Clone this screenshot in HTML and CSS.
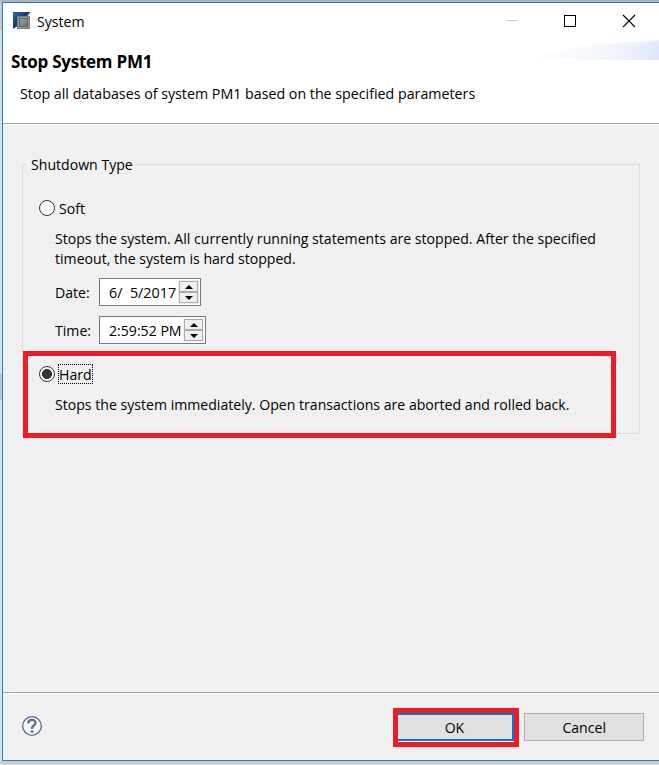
FILE: index.html
```html
<!DOCTYPE html>
<html lang="en">
<head>
<meta charset="utf-8">
<title>System</title>
<link rel="stylesheet" href="styles.css">
</head>
<body>
<main class="window">
  <header class="banner">
    <svg class="swoosh" width="137" height="20" viewBox="0 0 137 20">
      <defs>
        <linearGradient id="s1"><stop offset="0" stop-color="#fff"/><stop offset="1" stop-color="#edf2fc"/></linearGradient>
        <linearGradient id="s2"><stop offset="0" stop-color="#fff" stop-opacity="0"/><stop offset="1" stop-color="#dce4f8"/></linearGradient>
      </defs>
      <path d="M0 20C34 9 80 2 137 0v20z" fill="url(#s1)"/>
      <path d="M40 20C66 8 100 3 137 1v19z" fill="url(#s2)" opacity=".55"/>
      <path d="M48 20C72 9 110 6 137 6v14z" fill="url(#s2)" opacity=".8"/>
    </svg>
    <div class="titlebar">
      <svg class="app-icon" width="18" height="18" viewBox="0 0 18 18">
        <defs>
          <linearGradient id="blue" x1="0" y1="0" x2="1" y2="1"><stop offset="0" stop-color="#356b9f"/><stop offset=".45" stop-color="#123e70"/><stop offset="1" stop-color="#b8cbdc"/></linearGradient>
          <linearGradient id="grey" x1="0" y1="0" x2="1" y2="1"><stop offset="0" stop-color="#a5a5a5"/><stop offset="1" stop-color="#6e6e6e"/></linearGradient>
        </defs>
        <path d="M0 0h17.500L14 5H5v9l-5 3z" fill="url(#blue)"/>
        <rect x="4.500" y="4.500" width="12" height="12" fill="#999" stroke="#777"/>
        <rect x="6.500" y="6.500" width="8" height="8" fill="url(#grey)" stroke="#606060"/>
      </svg>
      <span class="title narrow">System</span>
      <svg class="controls" width="132" height="16" viewBox="0 0 132 16" fill="none" shape-rendering="crispEdges">
        <path d="M0 6.500h12" stroke="#ccc"/>
        <rect x="58.500" y="1.500" width="11" height="11" stroke="#000"/>
        <path d="M117 1l12 12M129 1l-12 12" stroke="#000" stroke-width="1.100" shape-rendering="auto"/>
      </svg>
    </div>
    <h1>Stop System PM1</h1>
    <p class="subtitle"><span class="narrow subtitle-text">Stop all databases of system PM1 based on the specified parameters</span></p>
  </header>
  <section class="content">
    <fieldset class="group">
      <legend><span class="narrow">Shutdown Type</span></legend>
      <label class="option"><span class="radio"></span><span class="option-name narrow">Soft</span></label>
      <p class="description"><span class="narrow">Stops the system. All currently running statements are stopped. After the specified<br>timeout, the system is hard stopped.</span></p>
      <div class="row">
        <span class="row-label"><span class="narrow">Date:</span></span>
        <div class="spinner date"><span class="value narrow">6/&nbsp; 5/2017</span>
          <span class="steps"><i class="step up"></i><i class="step down"></i></span></div>
      </div>
      <div class="row">
        <span class="row-label"><span class="narrow">Time:</span></span>
        <div class="spinner time"><span class="value narrow">2:59:52 PM</span>
          <span class="steps"><i class="step up"></i><i class="step down"></i></span></div>
      </div>
      <label class="option hard"><span class="radio checked"></span><span class="option-name focused"><span class="narrow">Hard</span></span></label>
      <p class="description"><span class="narrow">Stops the system immediately. Open transactions are aborted and rolled back.</span></p>
      <div class="highlight"></div>
    </fieldset>
  </section>
  <footer class="footer">
    <svg class="help" width="20" height="20" viewBox="0 0 20 20" fill="none">
      <circle cx="10" cy="10" r="9.300" fill="#f7f7f7" stroke="#596c91" stroke-width="1.300"/>
      <path d="M6.300 7.300C6.300 2.800 13.700 2.800 13.500 7c-.1 2.300-3.500 2.500-3.500 5.700" stroke="#596c91" stroke-width="2.300"/>
      <rect x="8.700" y="14.300" width="2.600" height="2.400" rx=".7" fill="#596c91"/>
    </svg>
    <div class="ok-highlight"><button class="button ok"><span class="narrow centered">OK</span></button></div>
    <button class="button cancel"><span class="narrow centered">Cancel</span></button>
  </footer>
</main>
</body>
</html>
```
FILE: styles.css
```css
* { box-sizing: border-box; }
body {
  margin: 0;
  height: 765px;
  padding: 2px 0 0 2px;
  overflow: hidden;
  background: linear-gradient(#b4b4b4 0 2px, #c4c8cd 2px 30px, #dedede 30px 374px, #c3c3c3 374px 400px, #dedede 400px 761px, #c8c5c5 761px, #d8d5d5 765px);
  font: 15px/20px "Open Sans", "Noto Sans", sans-serif;
  color: #000;
}
h1, p, fieldset, legend { margin: 0; padding: 0; }
.narrow { display: inline-block; transform: scaleX(.94); transform-origin: 0 50%; white-space: nowrap; }
.subtitle-text { transform: scaleX(.949); }
.centered { transform-origin: 50% 50%; }
.window {
  display: flex;
  flex-direction: column;
  height: 759px;
  background: #f0f0f0;
  border: 1px solid #1883d7;
  border-right: 0;
}
.banner {
  position: relative;
  height: 123px;
  background: #fff;
  border-bottom: 2px solid #fff;
  box-shadow: inset 0 -1px #a0a0a0;
}
.banner { height: 122px; border-bottom: 1px solid #fff; box-shadow: inset 0 -1px #a0a0a0; }
.swoosh { position: absolute; right: 0; top: 37px; }
.titlebar { display: flex; align-items: center; height: 37px; padding-left: 10px; }
.app-icon { margin-top: -2px; }
.title { margin: -2px 0 0 6px; }
.controls { margin-left: auto; margin-right: 21px; }
h1 { padding: 12px 0 0 8px; font-size: 17px; line-height: 20px; letter-spacing: -.25px; }
.subtitle { padding: 11px 0 0 17px; line-height: 20px; white-space: nowrap; }
.content { flex: 1; padding: 29px 19px 0 19px; }
.group {
  position: relative;
  min-width: 0;
  height: 280px;
  padding: 0 0 0 14px;
  border: 1px solid #dcdcdc;
}
legend { width: 107px; height: 20px; margin-left: -10px; padding: 0 0 0 4px; }
.option { display: flex; align-items: center; height: 22px; margin: 23px 0 0 2px; }
.radio {
  width: 16px;
  height: 16px;
  border: 1px solid #333;
  border-radius: 50%;
  background: #fff;
}
.checked { background: radial-gradient(circle, #333 0 4.700px, #fff 5.300px); }
.option-name { margin-left: 4px; }
.focused { width: 35px; height: 20px; margin-left: 3px; padding-left: 1px; line-height: 20px; outline: 1px dotted #000; outline-offset: -1px; }
.description { padding: 9px 0 0 18px; line-height: 20px; white-space: nowrap; }
.row { display: flex; align-items: center; height: 28px; margin: 10px 0 0 18px; }
.row-label { width: 44px; }
.spinner {
  display: flex;
  align-items: center;
  justify-content: space-between;
  height: 28px;
  padding: 1px 1px 1px 9px;
  border: 1px solid #7a7a7a;
  background: #fff;
  white-space: nowrap;
}
.value { width: 0; }
.date { width: 102px; }
.date .value { transform: scaleX(.955); }
.time { width: 107px; }
.steps { display: flex; flex-direction: column; flex-shrink: 0; width: 21px; height: 24px; border: 1px solid #f0f0f0; }
.step { display: flex; align-items: center; justify-content: center; height: 11px; border: 1px solid #acacac; background: #efefef; }
.step::before { content: ""; border: 4px solid transparent; }
.up::before { border-top: 0; border-bottom-color: #000; }
.down::before { border-bottom: 0; border-top-color: #000; }
.hard { margin-top: 19px; }
.highlight { position: absolute; left: 0; top: 177px; width: 593px; height: 87px; border: 5px solid #ed1c24; }
.footer {
  display: flex;
  align-items: flex-start;
  height: 68px;
  border-top: 1px solid #a0a0a0;
  box-shadow: inset 0 1px #fff;
}
.help { margin: 23px 0 0 19px; }
.ok-highlight { width: 126px; height: 39px; margin: 15px 5px 0 auto; border: 5px solid #ed1c24; background: #fff; }
.button {
  display: block;
  height: 28px;
  padding: 0;
  border: 1px solid #adadad;
  background: #e1e1e1;
  color: #000;
  font: inherit;
}
.ok { width: 116px; padding-right: 2px; border: 2px solid #0078d7; border-left: 0; }
.cancel { width: 120px; margin: 20px 15px 0 0; }
```
